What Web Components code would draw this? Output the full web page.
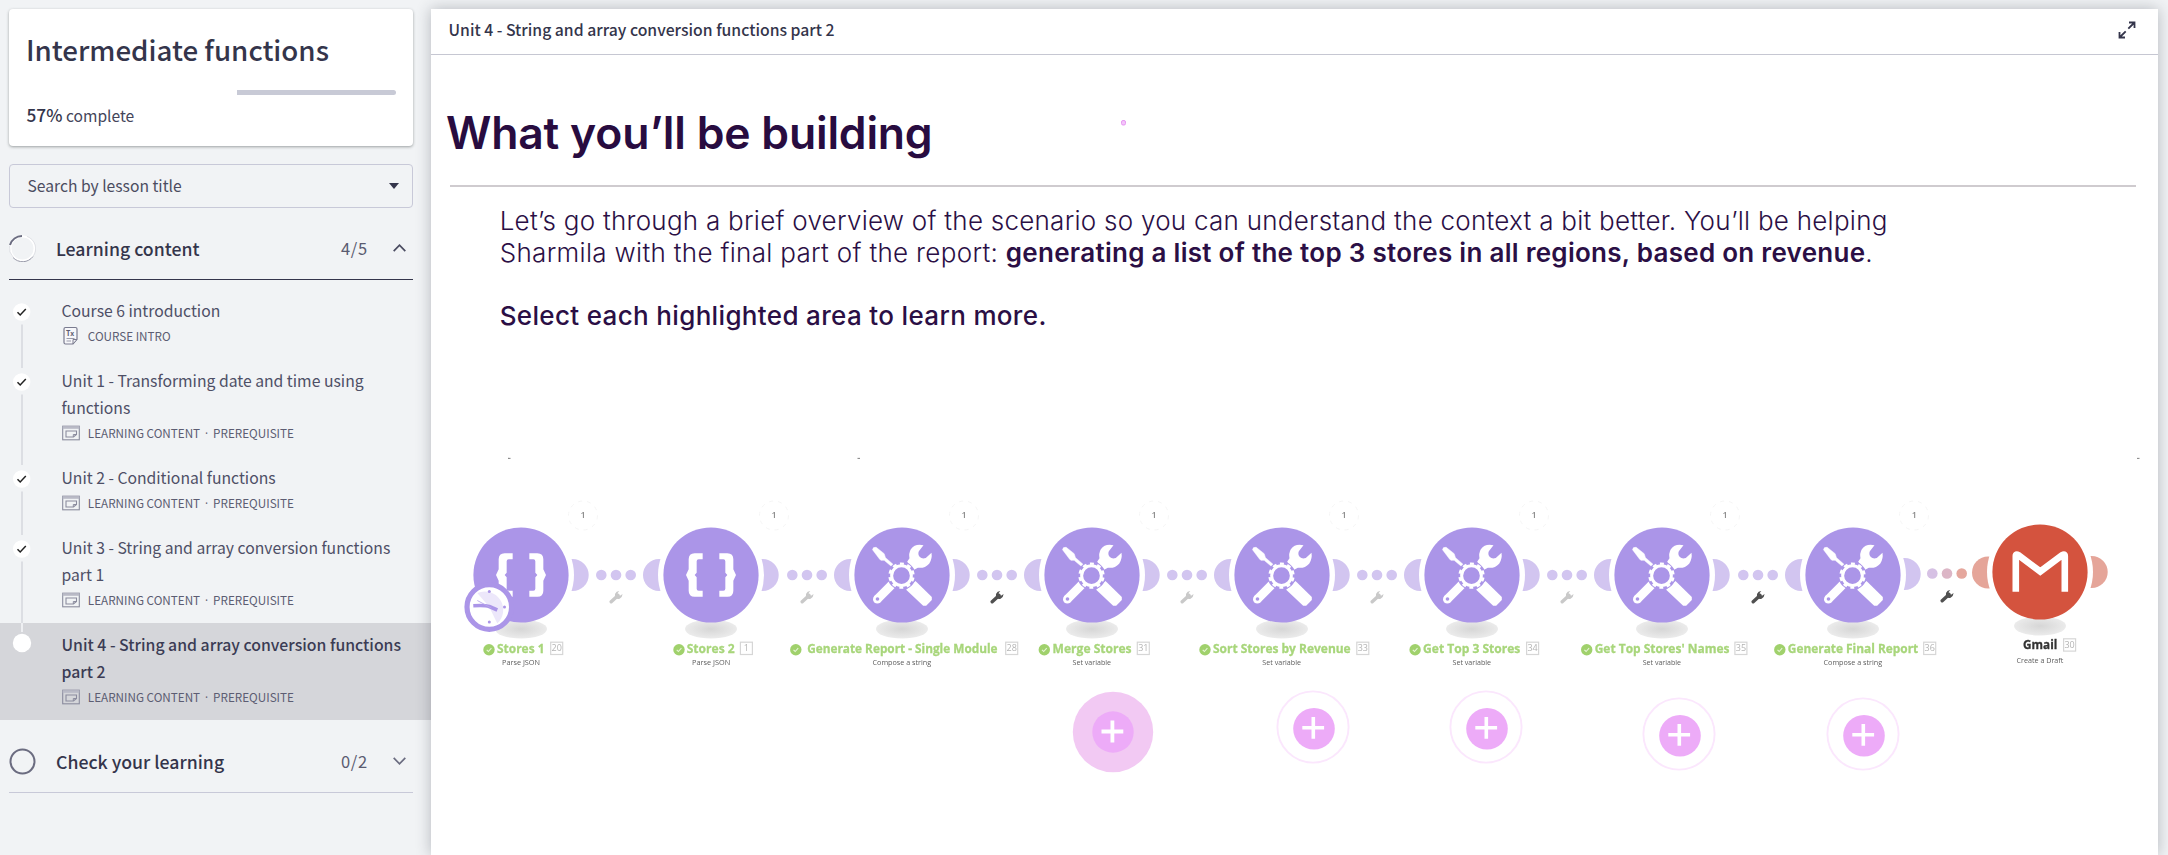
<!DOCTYPE html>
<html lang="en">
<head>
<meta charset="utf-8">
<title>Intermediate functions</title>
<style>
html,body{margin:0;height:100%;overflow:hidden}
body{background:#f1f3f5;font-family:"Noto Sans CJK SC",sans-serif;color:#34354b}
</style>
</head>
<body>
<course-app></course-app>
<script>
const define=(name,render)=>customElements.define(name,class extends HTMLElement{
  connectedCallback(){
    if(this.shadowRoot)return;
    const t=document.createElement('template');
    t.innerHTML=render(this);
    this.attachShadow({mode:'open'}).append(t.content.cloneNode(true));
  }
});

/* ---------- sidebar ---------- */
define('progress-card',el=>`
<style>
:host{display:block;box-sizing:border-box;width:404px;height:137px;padding:16px 18px 0 17px;background:#fff;border-radius:4px;box-shadow:0 1px 3px rgba(50,60,60,.45)}
h1{margin:0;font-size:27.700px;font-weight:500;line-height:48px;height:48px;white-space:nowrap}
.track{height:5px;margin-top:17px;margin-right:-1px;display:flex;justify-content:flex-end}
.rest{width:159px;height:5px;background:#c8cad6;border-radius:0 3px 3px 0}
p{margin:5.500px 0 0;padding-left:.5px;font-size:15.600px;line-height:28px;color:#44455a}
b{font-weight:500;font-size:17.300px;color:#34354b}
</style>
<h1><slot></slot></h1>
<div class="track"><div class="rest"></div></div>
<p><b>${el.getAttribute('percent')}</b> complete</p>`);

define('search-select',()=>`
<style>
:host{display:flex;align-items:center;justify-content:space-between;box-sizing:border-box;width:404px;height:44px;margin-top:18px;padding:0 13px 0 17.500px;border:1px solid #c8c9d8;border-radius:4px;font-size:15.650px;line-height:24px;color:#4b4c60}
span{margin-top:-1px}
svg{display:block}
</style>
<span><slot></slot></span>
<svg width="10" height="6"><path d="M0 0h10L5 6z" fill="#34354b"/></svg>`);

define('section-head',el=>{
  const open=el.hasAttribute('open');
  const ring=open
    ?`<circle cx="13.500" cy="13.500" r="12" fill="none" stroke="#fff" stroke-width="2"/><path d="M1 10A13 13 0 0 1 13 1" fill="none" stroke="#6b6c80" stroke-width="2"/><path d="M4 22.500A13 13 0 0 0 24 21.500" fill="none" stroke="#9a9baa" stroke-width="1"/><path d="M.6 11A13 13 0 0 0 4 22M24 21.500A13 13 0 0 0 18 1.400" fill="none" stroke="#d0d1d9" stroke-width=".6"/>`
    :`<circle cx="13.500" cy="13.500" r="12" fill="none" stroke="#6b6c80" stroke-width="2"/>`;
  return `
<style>
:host{display:flex;align-items:center;box-sizing:border-box;width:404px;height:${open?72:73}px;border-bottom:1px solid ${open?'#34354b':'#c8c9d8'};padding-top:${open?9:10}px}
.ring{flex:none}
.t{flex:1;margin-left:20px;font-size:17.700px;font-weight:500;line-height:28px;white-space:nowrap}
.n{font-size:16.500px;letter-spacing:.7px;color:#5a5b70;width:52px}
.c{margin-right:7px}
</style>
<svg class="ring" width="27" height="27">${ring}</svg>
<span class="t"><slot></slot></span>
<span class="n">${el.getAttribute('count')}</span>
<svg class="c" width="13" height="8"><path d="${open?'M.7 7.200L6.500 1.200l5.800 6':'M.7 .8l5.800 6 5.800-6'}" fill="none" stroke="${open?'#4a4b60':'#6b6c80'}" stroke-width="1.700"/></svg>`;
});

define('lesson-item',el=>{
  const cur=el.hasAttribute('current'),two=el.hasAttribute('tall'),intro=el.hasAttribute('intro');
  const h=two?97:70;
  const rail=cur
    ?`<path d="M22 0V9" stroke="#f4f5f7" stroke-width="1.500"/><circle cx="22" cy="20" r="9.200" fill="#fff"/>`
    :`<circle cx="21.700" cy="23" r="8.700" fill="#fff"/><path d="M17.500 23.300l2.700 2.700 5.600-6" fill="none" stroke="#222" stroke-width="1.500"/><path d="M22 35.500V${h+9}" stroke="#dcdee3" stroke-width="2"/>`;
  const icon=intro
    ?`<svg width="18" height="20"><path d="M3.500 1.500h10q1.500 0 1.500 1.500v10l-4 5h-7.500q-1.500 0-1.500-1.500v-13.500q0-1.500 1.500-1.500z" fill="#f7f7fa" stroke="#7a7b8f" stroke-width="1.200"/><path d="M11 18v-4.500h4z" fill="#f1f3f5" stroke="#7a7b8f"/><path d="M4.500 12.500h8M4.500 15h4.500" stroke="#9a9bab"/><text x="4" y="9.500" font-family="Noto Sans CJK SC,sans-serif" font-size="7" font-weight="700" fill="#5a5b70">Tx</text></svg>`
    :`<svg width="18" height="16"><rect x=".7" y="1.200" width="16.600" height="13.600" fill="none" stroke="#8b8c9e" stroke-width="1.100"/><rect x=".7" y="1.200" width="16.600" height="2.600" fill="#b9bac6"/><path d="M4 6h10.500v3.500L11.500 12H4z" fill="none" stroke="#8b8c9e" stroke-width="1.100"/><path d="M11.300 12V9.500h3.200" fill="none" stroke="#8b8c9e"/></svg>`;
  const meta=el.getAttribute('meta').split('|').join('<i>·</i>');
  return `
<style>
:host{display:flex;box-sizing:border-box;width:431px;height:${h}px;${cur?'background:#d5d6da;color:#3b3c54;font-weight:500;':'color:#4e4f66;'}}
.rail{flex:none;width:61.500px;overflow:visible;position:relative}
.t{padding-top:8px;font-size:${cur?15.820:15.730}px;line-height:27px;white-space:pre-line}
.m{display:flex;align-items:center;height:25px;font-size:11.700px;font-weight:400;color:#5c5d72;margin-top:-1px}
.m span{margin-left:8.300px;white-space:nowrap}
i{display:inline-block;width:13px;text-align:center;font-style:normal;font-family:"Open Sans",sans-serif;line-height:1}
</style>
<svg class="rail" height="${h}">${rail}</svg>
<div><div class="t"><slot></slot></div><div class="m">${icon}<span>${meta}</span></div></div>`;
});

define('course-sidebar',()=>`
<style>
:host{display:flex;flex-direction:column;width:431px;flex:none}
.pad{padding:9px 0 0 9px}
.list{padding-top:9px}
.more{padding-left:9px}
</style>
<div class="pad">
<progress-card percent="57%">Intermediate functions</progress-card>
<search-select>Search by lesson title</search-select>
<section-head open count="4/5">Learning content</section-head>
</div>
<div class="list">
<lesson-item intro meta="COURSE INTRO">Course 6 introduction</lesson-item>
<lesson-item tall meta="LEARNING CONTENT|PREREQUISITE">Unit 1 - Transforming date and time using
functions</lesson-item>
<lesson-item meta="LEARNING CONTENT|PREREQUISITE">Unit 2 - Conditional functions</lesson-item>
<lesson-item tall meta="LEARNING CONTENT|PREREQUISITE">Unit 3 - String and array conversion functions
part 1</lesson-item>
<lesson-item tall current meta="LEARNING CONTENT|PREREQUISITE">Unit 4 - String and array conversion functions
part 2</lesson-item>
</div>
<div class="more"><section-head count="0/2">Check your learning</section-head></div>`);

/* ---------- scenario canvas ---------- */
const TOOLS=`<g transform="scale(.3333) translate(-154.500,-165)">
<path d="M66 89Q67 80 77 82L101 101L105 113L130 135L125 141L101 121L91 121L87 117Z" fill="#fff" stroke="#fff" stroke-width="1.500" stroke-linejoin="round"/>
<path d="M219 76Q194 70 181 88Q174 100 177 115L170 125Q178 137 191 149L202 143Q222 146 236 131Q246 116 243 98L226 114Q215 118 208 111Q201 104 205 94Z" fill="#fff"/>
<path d="M80 238L124 194" stroke="#fff" stroke-width="26"/><circle cx="80.500" cy="237.500" r="13" fill="#fff"/><circle cx="81" cy="237" r="5.500" fill="#ab95e8"/>
<path d="M167 209L195 183L244 231V240L227 257H218Z" fill="#fff"/>
<circle cx="153" cy="167" r="42.500" fill="#ab95e8"/>
<circle cx="153" cy="167" r="29.500" fill="none" stroke="#fff" stroke-width="9"/>
<circle cx="153" cy="167" r="36" fill="none" stroke="#fff" stroke-width="7" stroke-dasharray="12 10.600" stroke-dashoffset="17"/>
</g>`;
const HALF='M-25 -65h-24q-18 0-18 18v30l-8 17 8 17v30q0 18 18 18h24v-18h-12q-6 0-6-6v-34l-6-7 6-7v-34q0-6 6-6h12z';
const BRACES=`<g transform="scale(.3333)" fill="#fff"><path d="${HALF}"/><path d="${HALF}" transform="scale(-1,1)"/></g>`;
const MAIL=`<path d="M-24.500 20.300V-15.500Q-24.500-18-22-16.500L0 0L22-16.500Q24.500-18 24.500-15.500V20.300" transform="translate(.3,-.5)" fill="none" stroke="#fff" stroke-width="6.600"/>`;
const CLOCK=`<g transform="translate(-31.700,32)"><circle r="22.300" fill="#fff" stroke="#ab95e8" stroke-width="5.200"/><path d="M0 0L-12-14A18.500 18.500 0 0 1 8 16.500Z" fill="#ece7fa"/><path d="M-16-1.300Q-4-2 0-.5L8 3" fill="none" stroke="#ab95e8" stroke-width="3.600"/><path d="M-12-6.500L2 1" stroke="#b9a6ec" stroke-width=".9"/><g fill="#ab95e8"><circle cy="-15.500" r="1.500"/><circle cx="15.200" r="1.500"/><circle cy="15" r="1.500"/></g></g>`;

define('flow-module',el=>{
  const a=n=>el.getAttribute(n),x=+a('x'),kind=a('kind'),mail=kind==='mail',y=mail?571.7:575;
  const color=mail?'#d4533e':'#ab95e8',ear=mail?'#e5a599':'#d2c5f0';
  const [t0,t1]=a('span').split(',').map(v=>+v-x),s=a('sub').split(',').map(v=>+v-x),b=+a('badge')-x;
  const ty=mail?76.8:78.200,sy=mail?90.800:90.400,by=mail?66.800:67.200;
  const last=x>1850&&!mail;
  let g='';
  if(a('left')!=='no')g+=`<circle cx="-52" cy="${mail?.5:0}" r="16" fill="${ear}"/>`;
  g+=`<circle cx="51.700" cy="${last?-1:0}" r="16" fill="${ear}"/>`;
  g+=`<circle r="53" fill="#fff"/><ellipse cx="0" cy="54" rx="26" ry="9.500" fill="url(#s)"/><circle r="47.600" fill="${color}"/>`;
  g+=kind==='json'?BRACES:mail?MAIL:TOOLS;
  if(el.hasAttribute('clock'))g+=CLOCK;
  if(!mail)g+=`<circle cx="${+a('check')-x}" cy="74.700" r="5.700" fill="#a0d16c"/><path d="M${+a('check')-x-2.300} 74.800l1.700 1.700 3-3.300" fill="none" stroke="#e6f5d6" stroke-width="1.100"/>`;
  g+=`<rect x="${b+.5}" y="${by}" width="12" height="12.300" fill="#fff" stroke="#d6d6d6" stroke-width="1.200"/>`;
  g+=`<text x="${b+6.500}" y="${by+9.200}" text-anchor="middle" font-size="9" fill="#b4b4b4">${a('no')}</text>`;
  g+=`<text x="${t0}" y="${ty}" textLength="${t1-t0}" lengthAdjust="spacingAndGlyphs" font-size="${a('size')||13}" font-weight="700" fill="${mail?'#333':'#a8d67b'}" stroke="${mail?'#333':'#a8d67b'}" stroke-width=".3">${el.textContent}</text>`;
  g+=`<text x="${s[0]}" y="${sy}" textLength="${s[1]-s[0]}" lengthAdjust="spacingAndGlyphs" font-size="7.600" fill="#5c5c5c">${a('note')}</text>`;
  return `
<style>
:host{position:absolute;left:${x-431}px;top:${y-55}px;width:0;height:0;font-family:"Open Sans",sans-serif}
svg{display:block;overflow:visible;filter:blur(.3px)}
</style>
<svg width="1" height="1"><defs><radialGradient id="s"><stop offset="0" stop-color="#d6d6d6"/><stop offset="1" stop-color="#ebebeb"/></radialGradient></defs>${g}</svg>`;
});

define('flow-link',el=>{
  const x=+el.getAttribute('x'),m=el.hasAttribute('mail'),dark=el.hasAttribute('dark');
  const c=m?['#d6c1e4','#dcb6c6','#e5a79d']:['#d2c5f0','#d2c5f0','#d2c5f0'];
  const y=m?-1.500:0;
  return `
<style>
:host{position:absolute;left:${x-431}px;top:520px;width:0;height:0;font-family:"Open Sans",sans-serif}
svg{display:block;overflow:visible;filter:blur(.3px)}
</style>
<svg width="1" height="1">
<circle cx="-14.700" cy="${y}" r="5.300" fill="${c[0]}"/><circle cy="${y}" r="5.300" fill="${c[1]}"/><circle cx="14.700" cy="${y}" r="5.300" fill="${c[2]}"/>
<g transform="translate(0,${m?21:22})"><path d="M-4.800 4.800L2-1.600" stroke="${dark?'#505050':'#c9c9c9'}" stroke-width="3.400" stroke-linecap="round"/><path d="M3.300-5.900Q.2-5.700-1-2.900Q-1.500-.8-.3 1.200Q1.500 2.400 3.600 1.700Q6.400.4 6.600-2.900L4-1.200L2-1.900L1.700-3.900Z" fill="${dark?'#505050':'#c9c9c9'}"/></g>
<text x="${m?-32.700:-33}" y="-57.500" text-anchor="middle" font-size="9" font-weight="600" fill="#8a8a8a">1</text>
<circle cx="-33" cy="-59.500" r="14.500" fill="none" stroke="#f3f3f3" stroke-width=".8" stroke-dasharray="4 5"/>
</svg>`;
});

define('hot-spot',el=>{
  const active=el.hasAttribute('active');
  return `
<style>
:host{position:absolute;left:${+el.getAttribute('x')-431}px;top:${+el.getAttribute('y')-55}px;width:0;height:0}
svg{display:block;overflow:visible}
</style>
<svg width="1" height="1">${active
  ?'<circle r="40.200" fill="#f2c9f3"/><circle r="20.700" fill="#edabf8"/><path d="M-11.500-.5H10.300M-.6-11.400V10.400" stroke="#fff" stroke-width="3.800"/>'
  :'<circle r="35.600" fill="none" stroke="#fbe7fd" stroke-width="1.900"/><circle cx="1" cy="1.700" r="20.800" fill="#edabf8"/><path d="M-10.700.8H11.100M.3-10.100V11.700" stroke="#fff" stroke-width="3.600"/>'}</svg>`;
});

define('scenario-canvas',()=>{
  const links=[616.3,806.5,996.6,1187,1377,1567.3,1757.7].map((x,i)=>`<flow-link x="${x}" ${i===2||i===6?'dark':''}></flow-link>`).join('');
  const mark=(x,y)=>`<path d="M${x-431} ${y-55}h2.500" stroke="#8a8a8a" stroke-width="1.100"/>`;
  return `
<style>
:host{position:absolute;inset:0;display:block;pointer-events:none}
.marks{display:block;width:100%;height:100%}
</style>
<svg class="marks">${mark(508,458.4)}${mark(857.5,458.4)}${mark(2137,458.4)}<rect x="690.500" y="65.500" width="4" height="4.500" rx="1.500" fill="#f4c4fa" stroke="#e79af2"/></svg>
<flow-module x="521" kind="json" left="no" clock span="497,544.500" check="489" badge="550.2" no="20" sub="502,540" note="Parse JSON">Stores 1</flow-module>
<flow-module x="711.3" kind="json" span="687,735" check="679.3" badge="740.2" no="1" sub="692.300,730.500" note="Parse JSON">Stores 2</flow-module>
<flow-module x="901.500" kind="tools" size="12" span="806.700,997" check="795.3" badge="1004.7" no="28" sub="872,930.700" note="Compose a string">Generate Report - Single Module</flow-module>
<flow-module x="1091.700" kind="tools" size="12.5" span="1052.300,1131.300" check="1044" badge="1136.5" no="31" sub="1072.300,1110.700" note="Set variable">Merge Stores</flow-module>
<flow-module x="1282" kind="tools" size="12.5" span="1213,1350.700" check="1205" badge="1356.3" no="33" sub="1262.300,1301" note="Set variable">Sort Stores by Revenue</flow-module>
<flow-module x="1472.200" kind="tools" size="12.5" span="1423.300,1520.500" check="1415.3" badge="1526.3" no="34" sub="1452.700,1491.300" note="Set variable">Get Top 3 Stores</flow-module>
<flow-module x="1662.300" kind="tools" size="12.5" span="1595,1729.700" check="1587" badge="1734.7" no="35" sub="1643,1681.300" note="Set variable">Get Top Stores' Names</flow-module>
<flow-module x="1852.500" kind="tools" size="12.5" span="1787.300,1917.700" check="1779.3" badge="1922.7" no="36" sub="1823,1881.700" note="Compose a string">Generate Final Report</flow-module>
<flow-module x="2040.200" kind="mail" span="2023.300,2057.500" badge="2063.3" no="30" sub="2016.700,2063.500" note="Create a Draft">Gmail</flow-module>
${links}<flow-link x="1947.200" mail dark></flow-link>
<hot-spot active x="1112.800" y="732.300"></hot-spot>
<hot-spot x="1312.800" y="727.300"></hot-spot>
<hot-spot x="1485.600" y="727.300"></hot-spot>
<hot-spot x="1679" y="734.300"></hot-spot>
<hot-spot x="1862.700" y="734.300"></hot-spot>`;
});

/* ---------- lesson panel ---------- */
define('lesson-panel',()=>`
<style>
:host{display:flex;flex-direction:column;width:1727px;height:846px;margin-top:9px;background:#fff;box-shadow:0 0 14px rgba(40,45,60,.3)}
header{display:flex;align-items:center;justify-content:space-between;box-sizing:border-box;height:46px;flex:none;padding:0 22px 3px 17.500px;border-bottom:1px solid #c6c7d2;font-size:15.780px;font-weight:500;line-height:24px}
svg{display:block}
main{position:relative;flex:1;min-height:0;font-family:Inter,sans-serif;color:#2b0f45}
h2{margin:51px 0 0 15px;font-size:44.500px;font-weight:600;line-height:54px;letter-spacing:-.2px;color:#280c40;white-space:nowrap}
hr{margin:24.500px 22px 0 19px;height:2px;border:0;background:#cfcbcf}
.copy{margin:18.700px 0 0 68.700px;font-size:26px;line-height:32px;font-weight:300;letter-spacing:.255px;white-space:nowrap}
.copy p{margin:0}
.copy .two{letter-spacing:.31px}
b{font-weight:600;letter-spacing:.28px}
.select{font-weight:500;letter-spacing:.34px;padding-top:31px}
</style>
<header><span>Unit 4 - String and array conversion functions part 2</span>
<svg width="18" height="18"><g fill="none" stroke="#34354b" stroke-width="1.800"><path d="M10.300 7.700L16 2M11 1.500H16.500V7M7.700 10.300L2 16M1.500 11V16.500H7"/></g></svg></header>
<main>
<h2>What you’ll be building</h2>
<hr>
<div class="copy">
<p>Let’s go through a brief overview of the scenario so you can understand the context a bit better. You’ll be helping</p>
<p class="two">Sharmila with the final part of the report: <b>generating a list of the top 3 stores in all regions, based on revenue</b>.</p>
<p class="select">Select each highlighted area to learn more.</p>
</div>
<scenario-canvas></scenario-canvas>
</main>`);

define('course-app',()=>`
<style>:host{display:flex;width:2168px;height:855px;overflow:hidden}</style>
<course-sidebar></course-sidebar>
<lesson-panel></lesson-panel>`);
</script>
</body>
</html>
